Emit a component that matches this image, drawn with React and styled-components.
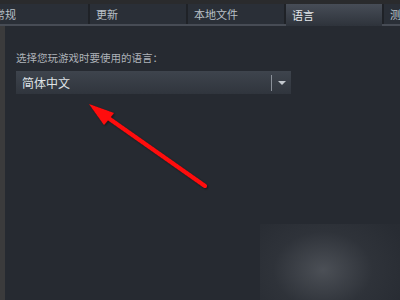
import React from 'react';
import styled, { createGlobalStyle } from 'styled-components';

const GlobalStyle = createGlobalStyle`
  html, body {
    margin: 0;
    padding: 0;
    background: #262a31;
  }
  body {
    font-family: "Noto Sans CJK SC", "Noto Sans", sans-serif;
    overflow: hidden;
  }
`;

const Window = styled.div`
  position: relative;
  width: 400px;
  height: 300px;
  overflow: hidden;
  display: flex;
  flex-direction: column;
  background: #262a31;
`;

const TopStrip = styled.div`
  height: 4px;
  background: #2a2b2d;
  flex: none;
`;

const TabBar = styled.div`
  display: flex;
  gap: 2px;
  height: 20px;
  margin-left: -8px;
  border-bottom: 2px solid #474c55;
  background: #1f2227;
  flex: none;
`;

const Tab = styled.div`
  flex: none;
  width: 96px;
  height: ${p => (p.$active ? '22px' : '20px')};
  box-sizing: border-box;
  padding-left: ${p => p.$indent || 6}px;
  display: flex;
  align-items: center;
  font-size: 11px;
  color: ${p => (p.$active ? '#e4e8ec' : '#b9c0c8')};
  background: ${p =>
    p.$active
      ? 'linear-gradient(to bottom, #474d57, #2e333b)'
      : '#2a2f37'};
  white-space: nowrap;
  overflow: hidden;
  position: relative;
  z-index: 1;
`;

const Body = styled.div`
  flex: 1;
  display: flex;
`;

const SideStrip = styled.div`
  width: 5px;
  background: #3b3b3c;
  flex: none;
`;

const Content = styled.div`
  flex: 1;
  padding: 25px 0 0 11px;
`;

const Label = styled.div`
  font-size: 10.5px;
  color: #aeb3b9;
  line-height: 14px;
  margin-bottom: 6px;
`;

const Select = styled.div`
  width: 275px;
  height: 23px;
  box-sizing: border-box;
  display: flex;
  align-items: center;
  background: linear-gradient(to bottom, #3e444d, #30353d);
  padding-left: 6px;
`;

const SelectText = styled.span`
  flex: 1;
  font-size: 12px;
  color: #dfe3e7;
`;

const Divider = styled.span`
  width: 1px;
  height: 16px;
  background: #8a9099;
`;

const Caret = styled.span`
  width: 19px;
  display: flex;
  justify-content: center;
  &::after {
    content: '';
    border-left: 4px solid transparent;
    border-right: 4px solid transparent;
    border-top: 4px solid #c3c8ce;
  }
`;

const Glow = styled.div`
  position: absolute;
  left: 260px;
  top: 224px;
  width: 140px;
  height: 76px;
  pointer-events: none;
  background:
    radial-gradient(ellipse 90px 70px at 63px 46px, rgba(130, 134, 140, 0.4), rgba(90, 94, 100, 0.15) 55%, rgba(60, 64, 70, 0.04) 100%),
    rgba(60, 64, 70, 0.06);
`;

const Arrow = styled.svg`
  position: absolute;
  left: 0;
  top: 0;
  pointer-events: none;
`;

const tabs = ['常规', '更新', '本地文件', '语言', '测试'];

export default function App() {
  return (
    <>
      <GlobalStyle />
      <Window>
        <TopStrip />
        <TabBar>
          {tabs.map((t, i) => (
            <Tab key={t} $active={t === '语言'} $indent={i === 0 ? 2 : 6}>
              {t}
            </Tab>
          ))}
        </TabBar>
        <Body>
          <SideStrip />
          <Content>
            <Label>选择您玩游戏时要使用的语言：</Label>
            <Select>
              <SelectText>简体中文</SelectText>
              <Divider />
              <Caret />
            </Select>
          </Content>
        </Body>
        <Glow />
        <Arrow width="400" height="300" viewBox="0 0 400 300">
          <defs>
            <filter id="sh" x="-10%" y="-10%" width="120%" height="120%">
              <feDropShadow dx="1" dy="1" stdDeviation="1" floodColor="#000" floodOpacity="0.5" />
            </filter>
          </defs>
          <g filter="url(#sh)">
            <line x1="205" y1="186" x2="104" y2="115" stroke="#ff0a0a" strokeWidth="4" strokeLinecap="round" />
            <polygon points="89,104 114,113 104,125" fill="#ff0a0a" />
          </g>
        </Arrow>
      </Window>
    </>
  );
}
